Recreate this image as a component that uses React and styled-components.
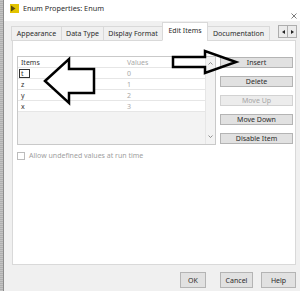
import React from "react";
import styled, { createGlobalStyle } from "styled-components";

const Global = createGlobalStyle`
  html, body { margin: 0; padding: 0; background: #f0f0f0; }
  body { font-family: "Noto Sans", "Open Sans", sans-serif; font-size: 7px; color: #2b2b2b; }
  #root { width: 300px; height: 291px; }
`;

const Screen = styled.div`
  position: relative;
  width: 300px;
  height: 291px;
  display: flex;
  overflow: hidden;
`;

const LeftEdge = styled.div`
  width: 3px;
  background: repeating-linear-gradient(180deg, #c4c4c4 0 1px, #b0b0b0 1px 2px);
  border-right: 1px solid #8c8c8c;
`;

const Window = styled.div`
  flex: 1;
  display: flex;
  flex-direction: column;
  background: #f0f0f0;
`;

const TitleBar = styled.div`
  height: 21px;
  background: #fff;
  display: flex;
  align-items: flex-start;
  padding-left: 6px;
  box-sizing: border-box;
`;

const TitleIcon = styled.svg`
  width: 9px;
  height: 9px;
  margin-top: 4px;
  flex: none;
`;

const TitleText = styled.div`
  margin-left: 4px;
  margin-top: 3px;
  line-height: 11px;
  font-size: 7.3px;
`;

const CloseX = styled.svg`
  margin-left: auto;
  margin-right: 3px;
  margin-top: 13px;
  width: 6px;
  height: 6px;
`;

const TabBar = styled.div`
  height: 20px;
  display: flex;
  align-items: flex-end;
  padding-left: 8px;
  padding-right: 3px;
  box-sizing: border-box;
  position: relative;
  z-index: 1;
  margin-bottom: -1px;
`;

const Tab = styled.div`
  width: ${(p) => p.$w}px;
  height: ${(p) => (p.$active ? 19 : 15)}px;
  box-sizing: border-box;
  display: flex;
  align-items: center;
  justify-content: center;
  padding-bottom: ${(p) => (p.$active ? 3 : 1)}px;
  background: ${(p) => (p.$active ? "#fff" : "#f0f0f0")};
  border: 1px solid #d9d9d9;
  border-bottom: ${(p) => (p.$active ? "1px solid #fff" : "1px solid #d9d9d9")};
  margin-left: -1px;
  white-space: nowrap;
`;

const TabArrows = styled.div`
  margin-left: auto;
  display: flex;
  align-self: flex-end;
  margin-bottom: 3px;
`;

const TabArrow = styled.div`
  width: 10px;
  height: 13px;
  box-sizing: border-box;
  border: 1px solid #adadad;
  background: #ebebeb;
  display: flex;
  align-items: center;
  justify-content: center;
  margin-left: -1px;
`;

const Panel = styled.div`
  flex: 1;
  margin: 0 4px 0 8px;
  background: #fff;
  border: 1px solid #d9d9d9;
  padding: 15px 2px 0 4px;
  display: flex;
  flex-direction: column;
`;

const EditArea = styled.div`
  display: flex;
  gap: 4px;
`;

const ListBox = styled.div`
  width: 199px;
  height: 89px;
  box-sizing: border-box;
  border: 1px solid #c9c9c9;
  display: flex;
`;

const ListContent = styled.div`
  flex: 1;
  display: flex;
  flex-direction: column;
`;

const ListRow = styled.div`
  height: 10px;
  flex: none;
  display: flex;
  align-items: center;
  border-bottom: 1px solid #e6e6e6;
  background: #fff;
`;

const ItemCell = styled.div`
  width: 106px;
  padding-left: 3px;
  box-sizing: border-box;
  color: #333;
  line-height: 9px;
`;

const ValueCell = styled.div`
  padding-left: 3px;
  color: #a8a8a8;
  line-height: 9px;
`;

const EditBox = styled.span`
  display: inline-block;
  width: 11px;
  height: 9px;
  box-sizing: border-box;
  border: 1px solid #333;
  margin-left: -2px;
  padding-left: 1px;
  line-height: 7px;
  vertical-align: middle;
`;

const ListFill = styled.div`
  flex: 1;
  background: #f3f3f3;
`;

const ScrollBar = styled.div`
  width: 10px;
  background: #f3f3f3;
  border-left: 1px solid #e6e6e6;
  display: flex;
  flex-direction: column;
  align-items: center;
  justify-content: space-between;
  padding: 5px 0 6px;
  box-sizing: border-box;
`;

const Chevron = styled.svg`
  width: 5px;
  height: 3px;
`;

const ButtonColumn = styled.div`
  width: 73px;
  display: flex;
  flex-direction: column;
  gap: 8px;
  padding-top: 1px;
`;

const SideButton = styled.div`
  height: 11px;
  box-sizing: border-box;
  border: 1px solid ${(p) => (p.$disabled ? "#d2d2d2" : "#b4b4b4")};
  background: ${(p) => (p.$disabled ? "#ececec" : "#e1e1e1")};
  color: ${(p) => (p.$disabled ? "#a6a6a6" : "#2b2b2b")};
  display: flex;
  align-items: center;
  justify-content: center;
  line-height: 9px;
`;

const CheckRow = styled.div`
  display: flex;
  align-items: center;
  gap: 4px;
  margin-top: 6px;
  color: #a0a0a0;
`;

const CheckBox = styled.div`
  width: 8px;
  height: 8px;
  box-sizing: border-box;
  border: 1px solid #bcbcbc;
  background: #fff;
`;

const Footer = styled.div`
  height: 26px;
  display: flex;
  align-items: flex-start;
  justify-content: flex-end;
  padding: 7px 4px 0 0;
  box-sizing: border-box;
`;

const FooterButton = styled.div`
  width: ${(p) => p.$w}px;
  margin-left: ${(p) => p.$gap}px;
  height: 16px;
  box-sizing: border-box;
  border: 1px solid #b4b4b4;
  background: #e1e1e1;
  display: flex;
  align-items: center;
  justify-content: center;
`;

const Annotations = styled.svg`
  position: absolute;
  left: 0;
  top: 0;
  width: 300px;
  height: 291px;
  pointer-events: none;
`;

const items = [
  { name: "t", value: "0", editing: true },
  { name: "z", value: "1" },
  { name: "y", value: "2" },
  { name: "x", value: "3" },
];

const tabs = [
  { label: "Appearance", w: 51 },
  { label: "Data Type", w: 43 },
  { label: "Display Format", w: 60 },
  { label: "Edit Items", w: 46, active: true },
  { label: "Documentation", w: 63 },
];

const sideButtons = [
  { label: "Insert" },
  { label: "Delete" },
  { label: "Move Up", disabled: true },
  { label: "Move Down" },
  { label: "Disable Item" },
];

export default function App() {
  return (
    <>
      <Global />
      <Screen>
        <LeftEdge />
        <Window>
          <TitleBar>
            <TitleIcon viewBox="0 0 9 9">
              <rect x="0" y="0" width="9" height="9" fill="#e3c400" />
              <polygon points="1,1.5 5.5,4.5 1,7.5" fill="#5a4a10" />
            </TitleIcon>
            <TitleText>Enum Properties: Enum</TitleText>
            <CloseX viewBox="0 0 6 6">
              <path d="M0.5 0.5 L5.5 5.5 M5.5 0.5 L0.5 5.5" stroke="#444" strokeWidth="0.7" />
            </CloseX>
          </TitleBar>
          <TabBar>
            {tabs.map((t) => (
              <Tab key={t.label} $w={t.w} $active={t.active}>
                {t.label}
              </Tab>
            ))}
            <TabArrows>
              <TabArrow>
                <svg width="3" height="4" viewBox="0 0 3 4">
                  <polygon points="3,0 0,2 3,4" fill="#222" />
                </svg>
              </TabArrow>
              <TabArrow>
                <svg width="3" height="4" viewBox="0 0 3 4">
                  <polygon points="0,0 3,2 0,4" fill="#222" />
                </svg>
              </TabArrow>
            </TabArrows>
          </TabBar>
          <Panel>
            <EditArea>
              <ListBox>
                <ListContent>
                  <ListRow>
                    <ItemCell>Items</ItemCell>
                    <ValueCell>Values</ValueCell>
                  </ListRow>
                  {items.map((it) => (
                    <ListRow key={it.name}>
                      <ItemCell>
                        {it.editing ? <EditBox>{it.name}</EditBox> : it.name}
                      </ItemCell>
                      <ValueCell>{it.value}</ValueCell>
                    </ListRow>
                  ))}
                  <ListFill />
                </ListContent>
                <ScrollBar>
                  <Chevron viewBox="0 0 5 3">
                    <path d="M0.5 2.5 L2.5 0.5 L4.5 2.5" fill="none" stroke="#777" strokeWidth="0.8" />
                  </Chevron>
                  <Chevron viewBox="0 0 5 3">
                    <path d="M0.5 0.5 L2.5 2.5 L4.5 0.5" fill="none" stroke="#777" strokeWidth="0.8" />
                  </Chevron>
                </ScrollBar>
              </ListBox>
              <ButtonColumn>
                {sideButtons.map((b) => (
                  <SideButton key={b.label} $disabled={b.disabled}>
                    {b.label}
                  </SideButton>
                ))}
              </ButtonColumn>
            </EditArea>
            <CheckRow>
              <CheckBox />
              <span>Allow undefined values at run time</span>
            </CheckRow>
          </Panel>
          <Footer>
            <FooterButton $w={26} $gap={0}>OK</FooterButton>
            <FooterButton $w={33} $gap={14}>Cancel</FooterButton>
            <FooterButton $w={35} $gap={8}>Help</FooterButton>
          </Footer>
        </Window>
        <Annotations viewBox="0 0 300 291">
          <polygon
            points="45,81 69,59 69,69 94,69 94,93 69,93 69,103"
            fill="#fff"
            stroke="#000"
            strokeWidth="2.5"
            strokeLinejoin="miter"
          />
          <polygon
            points="173,57 205,57 205,51 236,62 205,73 205,67 173,67"
            fill="none"
            stroke="#000"
            strokeWidth="2.5"
            strokeLinejoin="miter"
          />
        </Annotations>
      </Screen>
    </>
  );
}
